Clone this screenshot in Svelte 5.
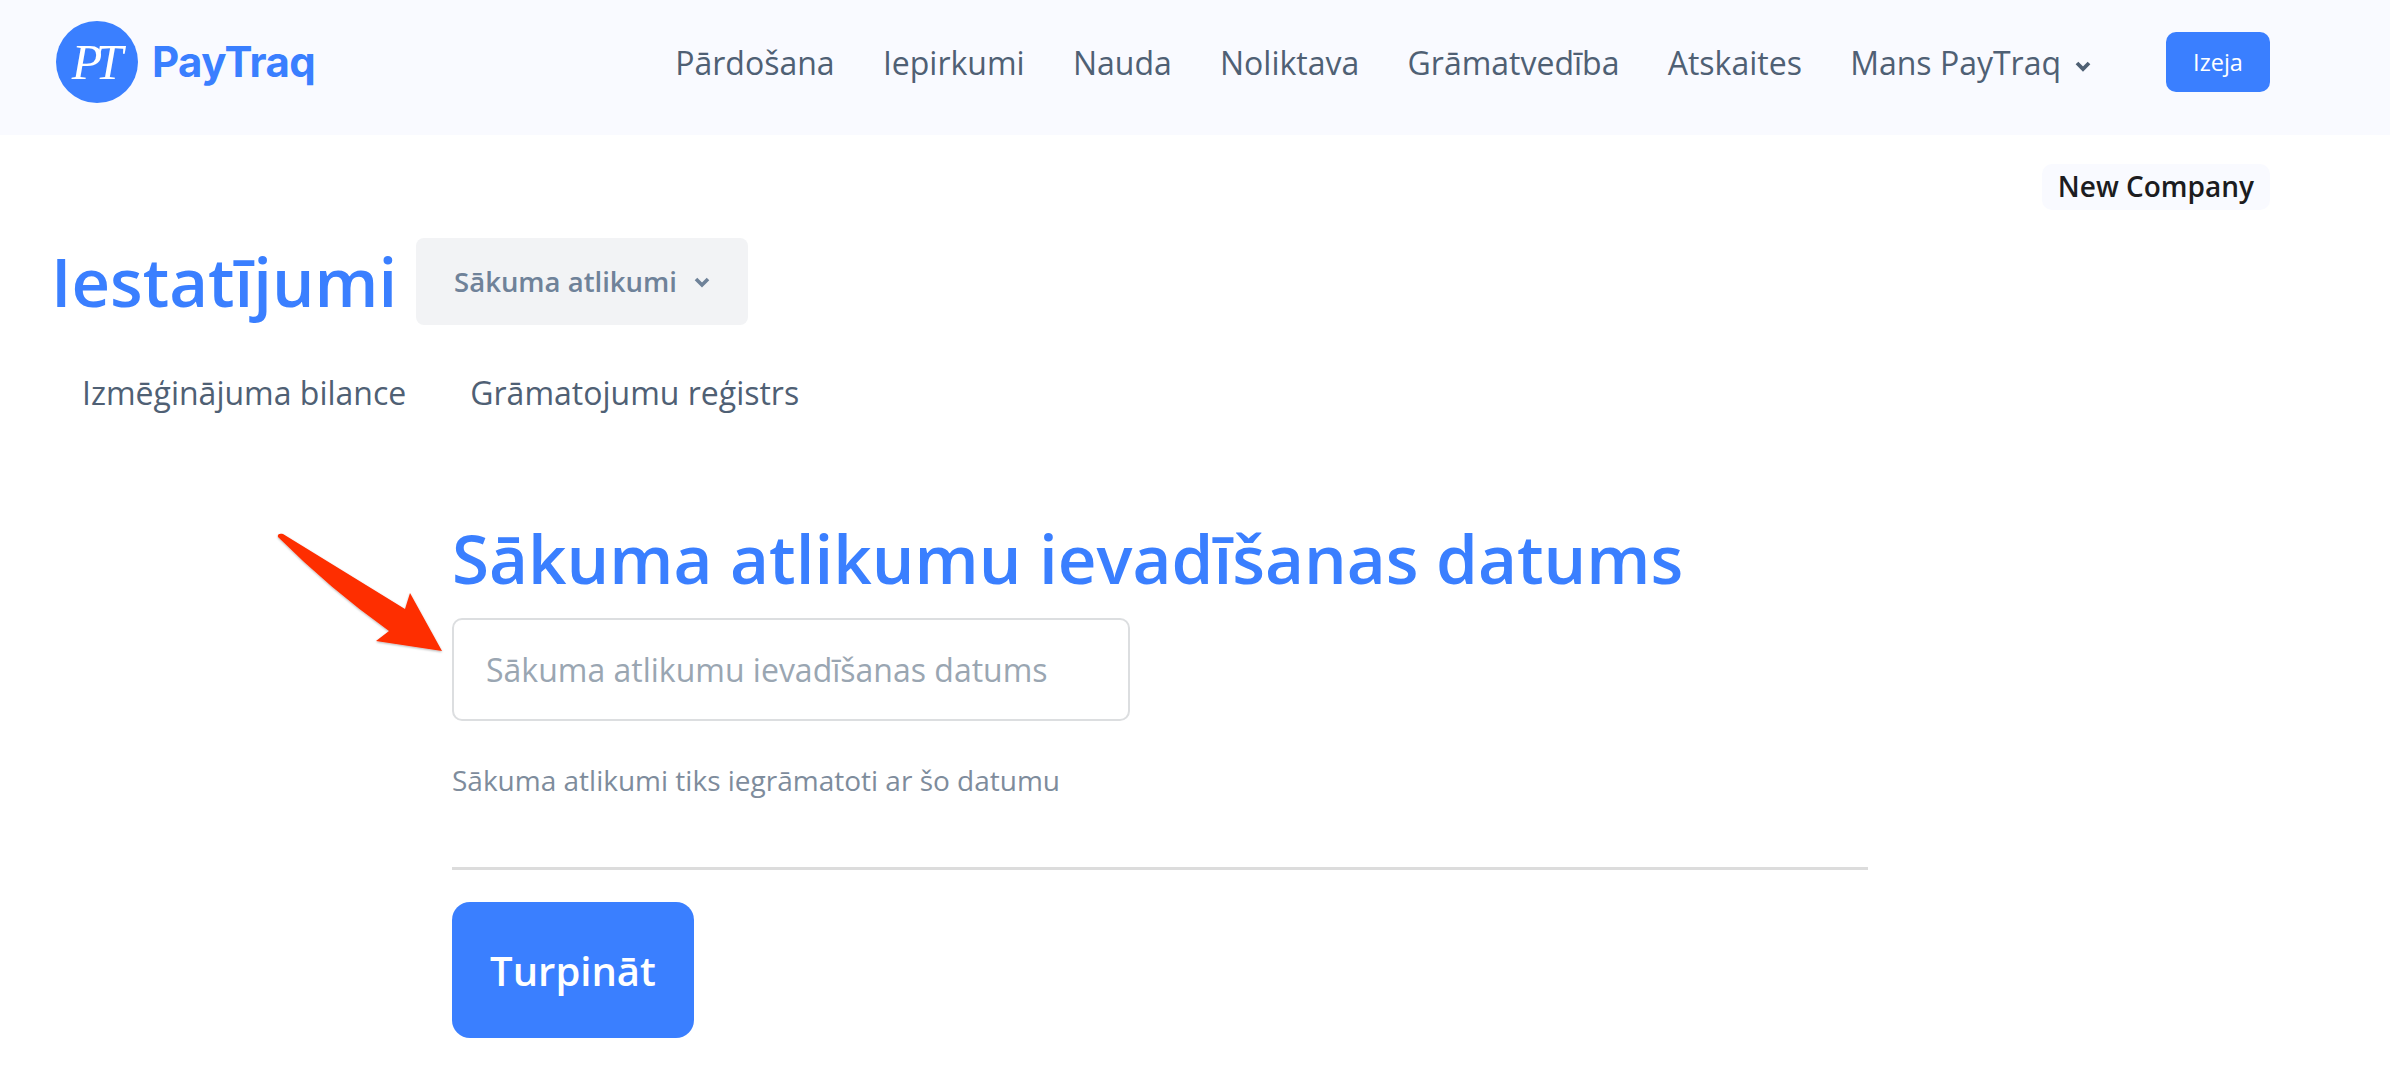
<script>
  const navItems = ['Pārdošana', 'Iepirkumi', 'Nauda', 'Noliktava', 'Grāmatvedība', 'Atskaites'];
  const tabs = ['Izmēģinājuma bilance', 'Grāmatojumu reģistrs'];
</script>

<header class="topbar">
  <div class="logo">
    <div class="logo-mark"><span>PT</span></div>
    <span class="logo-name">PayTraq</span>
  </div>
  <nav class="main-nav">
    {#each navItems as item}
      <span class="nav-link">{item}</span>
    {/each}
    <span class="nav-link with-caret">
      Mans PayTraq
      <svg class="caret" width="16" height="12" viewBox="0 0 16 12"><path d="M2 3l6 6 6-6" fill="none" stroke="#4f6074" stroke-width="3.800"/></svg>
    </span>
  </nav>
  <button class="logout">Izeja</button>
</header>

<div class="company-row">
  <span class="company">New Company</span>
</div>

<div class="title-row">
  <h1>Iestatījumi</h1>
  <div class="section-select">
    Sākuma atlikumi
    <svg width="16" height="12" viewBox="0 0 16 12"><path d="M2 3l6 6 6-6" fill="none" stroke="#6f8299" stroke-width="3.600"/></svg>
  </div>
</div>

<div class="tabs">
  {#each tabs as tab}
    <span>{tab}</span>
  {/each}
</div>

<main class="form">
  <h2>Sākuma atlikumu ievadīšanas datums</h2>
  <input type="text" placeholder="Sākuma atlikumu ievadīšanas datums" />
  <p class="hint">Sākuma atlikumi tiks iegrāmatoti ar šo datumu</p>
  <hr />
  <button class="next">Turpināt</button>

  <svg class="arrow" width="180" height="136" viewBox="0 0 180 136">
    <defs>
      <filter id="arrow-shadow" x="-10%" y="-10%" width="120%" height="120%">
        <feDropShadow dx="0" dy="1" stdDeviation="1" flood-color="#000" flood-opacity="0.3"/>
      </filter>
    </defs>
    <path d="M8 6 C7 3 10 2 13 3 L135 78 L140 62 L172 120 L106 110 L119 100 Q60 58 8 6Z" fill="#fe2d00" filter="url(#arrow-shadow)"/>
  </svg>
</main>

<style>
  :global(body) {
    margin: 0;
    background: #fff;
    font-family: "Open Sans", "Noto Sans", sans-serif;
  }

  .topbar {
    height: 135px;
    background: #f9faff;
    display: flex;
    align-items: center;
    padding: 0 120px 0 56px;
    box-sizing: border-box;
  }

  .logo {
    display: flex;
    align-items: center;
    gap: 14px;
    margin-top: -12px;
  }

  .logo-mark {
    width: 82px;
    height: 82px;
    border-radius: 50%;
    background: #3a7fff;
    display: flex;
    align-items: center;
    justify-content: center;
  }

  .logo-mark span {
    color: #fff;
    font-family: "Liberation Serif", serif;
    font-style: italic;
    font-size: 50px;
    line-height: 1;
    letter-spacing: -7px;
    margin-left: -6px;
  }

  .logo-name {
    color: #3a7fff;
    font-family: Inter, sans-serif;
    font-weight: 700;
    font-size: 42px;
    letter-spacing: -0.6px;
  }

  .main-nav {
    margin-left: auto;
    display: flex;
    align-items: center;
    gap: 48.250px;
  }

  .nav-link {
    color: #4f6074;
    font-size: 32px;
    white-space: nowrap;
    margin-top: -10px;
  }

  .with-caret {
    display: flex;
    align-items: center;
    gap: 14px;
  }

  .caret {
    margin-top: 6px;
  }

  .logout {
    margin-left: 75px;
    margin-top: -12px;
    width: 104px;
    height: 60px;
    border: none;
    border-radius: 10px;
    background: #3a7fff;
    color: #fff;
    font-family: inherit;
    font-size: 23.500px;
    font-weight: 500;
  }

  .company-row {
    display: flex;
    justify-content: flex-end;
    padding: 29px 120px 0 0;
  }

  .company {
    background: #f9faff;
    border-radius: 10px;
    padding: 0 16px;
    height: 46px;
    line-height: 44px;
    font-size: 28px;
    font-weight: 600;
    color: #1c1c20;
  }

  .title-row {
    display: flex;
    align-items: center;
    gap: 19px;
    padding: 28px 0 0 51px;
  }

  h1 {
    margin: 0;
    font-size: 67px;
    font-weight: 600;
    color: #3a7fff;
    line-height: 87px;
  }

  .section-select {
    height: 87px;
    width: 332px;
    box-sizing: border-box;
    background: #f2f3f5;
    border-radius: 8px;
    display: flex;
    align-items: center;
    gap: 17px;
    padding-left: 38px;
    font-size: 27.500px;
    font-weight: 600;
    color: #6f8299;
  }

  .tabs {
    display: flex;
    gap: 64px;
    padding: 40px 0 0 82px;
    font-size: 32px;
    line-height: 56px;
    color: #4f6074;
  }

  .form {
    position: relative;
    margin: 94px 0 0 452px;
    width: 1416px;
  }

  h2 {
    margin: 0;
    font-size: 67.300px;
    font-weight: 600;
    line-height: 87px;
    color: #3a7fff;
  }

  input {
    display: block;
    margin-top: 16px;
    width: 678px;
    height: 103px;
    box-sizing: border-box;
    padding: 0 32px;
    border: 2px solid #dcdee0;
    border-radius: 10px;
    font-family: inherit;
    font-size: 32px;
    background: #fff;
  }

  input::placeholder {
    color: #9aa6b2;
    opacity: 1;
  }

  .hint {
    margin: 41px 0 0;
    font-size: 28px;
    line-height: 36px;
    color: #7e8c9c;
  }

  hr {
    margin: 69px 0 0;
    border: none;
    height: 3px;
    background: #dcdcdc;
  }

  .next {
    display: block;
    margin-top: 32px;
    width: 242px;
    height: 136px;
    border: none;
    border-radius: 18px;
    background: #3a7fff;
    color: #fff;
    font-family: inherit;
    font-size: 40px;
    font-weight: 600;
  }

  .arrow {
    position: absolute;
    left: -182px;
    top: 16px;
  }
</style>
